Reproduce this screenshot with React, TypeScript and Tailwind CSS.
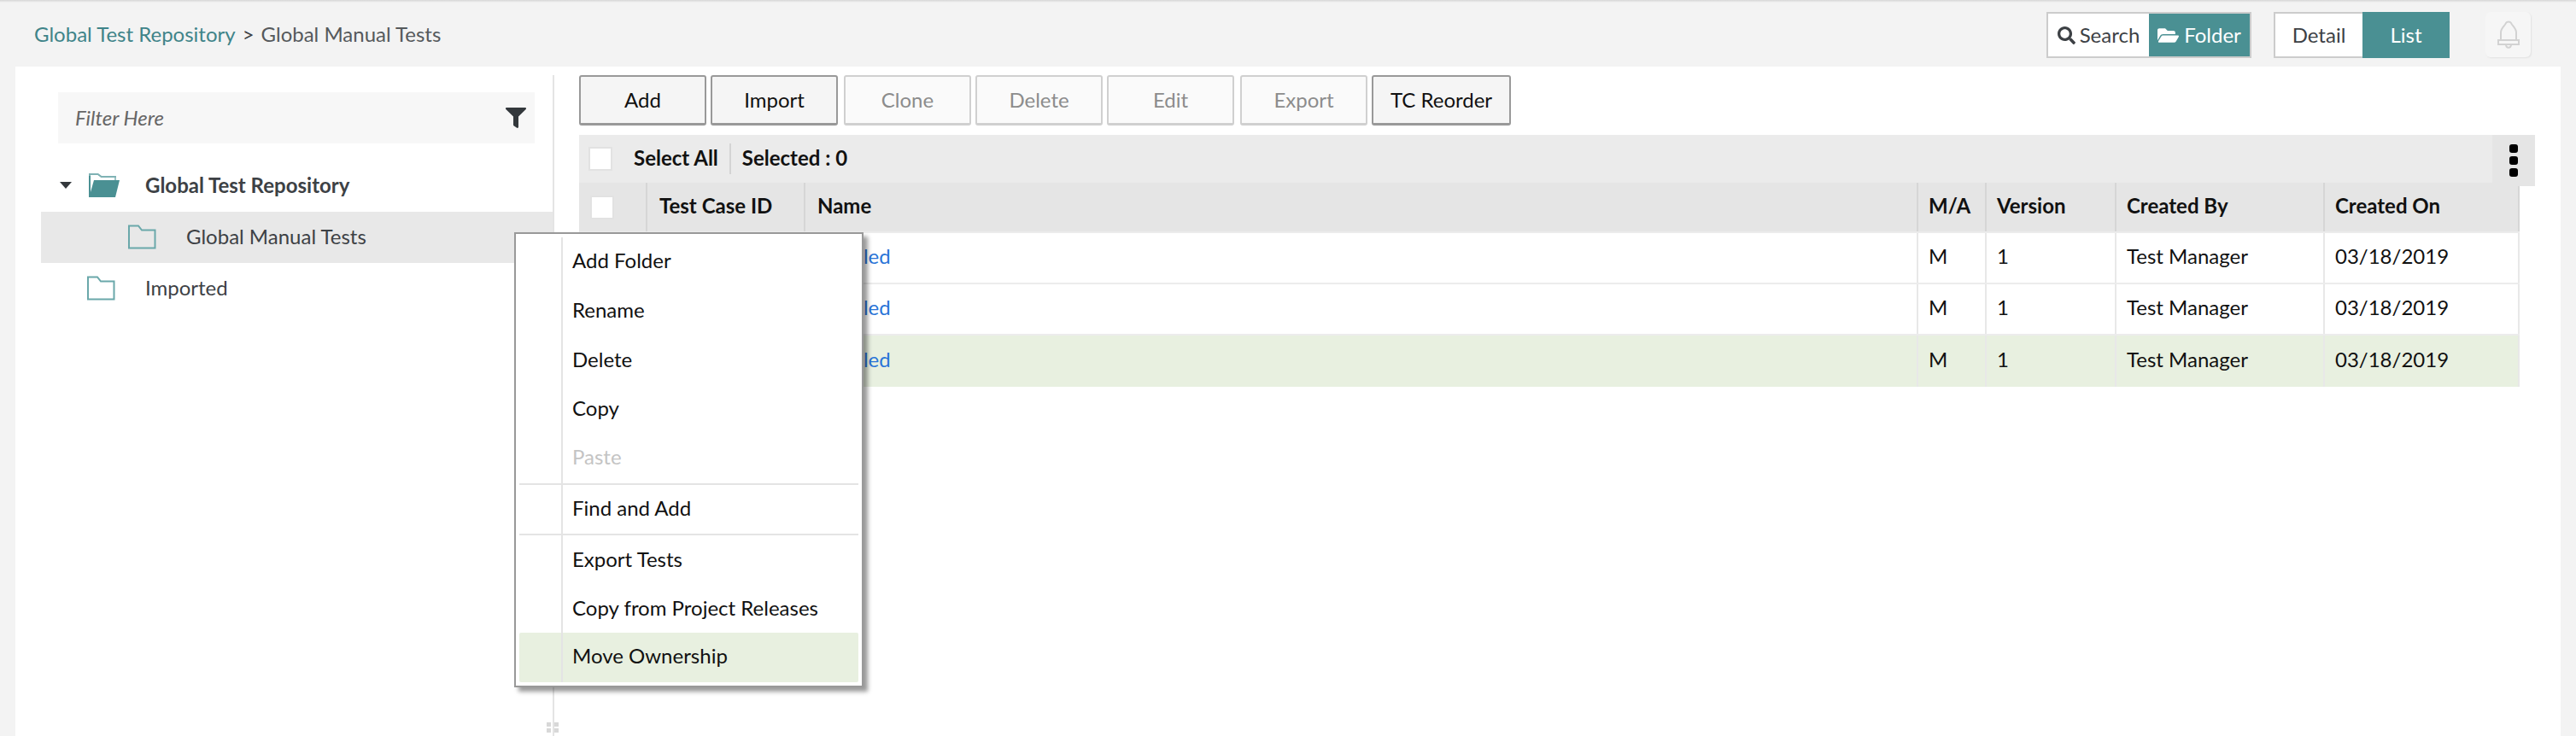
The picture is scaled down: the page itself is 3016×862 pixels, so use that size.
import { FaFilter, FaFolderOpen, FaSearch } from "react-icons/fa";

function OpenFolder() {
  return (
    <svg width="36" height="28" viewBox="0 0 36 28" className="shrink-0">
      <path d="M0 0h11l4 3h17v6H30V5H14L10 2H2v26H0z" fill="#7fb2b4" />
      <path d="M2 2h8l4 3h16v4H8L5 13 2 24z" fill="#ffffff" />
      <path d="M0 28V3h2v19L6 8h30l-5 20z" fill="#4a9093" />
      <path d="M30 5h2v3h-2z" fill="#9cc4c5" />
    </svg>
  );
}

function OutlineFolder() {
  return (
    <svg width="33" height="29" viewBox="0 0 33 29" className="shrink-0" fill="none">
      <path d="M1 27.500V1.500h11l4 5h15.500v21z" stroke="#6aa8aa" strokeWidth="2" />
    </svg>
  );
}

function Bell() {
  return (
    <svg width="26" height="33" viewBox="0 0 26 33" fill="none" stroke="#d2d2d2" strokeWidth="2">
      <path d="M4 23V14C4 9 9 6 10 3c1-2 5-2 6 0 1 3 6 6 6 11v9" />
      <path d="M1 23h24v5H1z" />
      <path d="M10 28c0 5 6 5 6 0" />
    </svg>
  );
}

const toolbar = [
  { label: "Add", on: true, w: "w-[149px]", ml: "" },
  { label: "Import", on: true, w: "w-[149px]", ml: "ml-[5px]" },
  { label: "Clone", on: false, w: "w-[149px]", ml: "ml-[7px]" },
  { label: "Delete", on: false, w: "w-[149px]", ml: "ml-[5px]" },
  { label: "Edit", on: false, w: "w-[149px]", ml: "ml-[5px]" },
  { label: "Export", on: false, w: "w-[149px]", ml: "ml-[7px]" },
  { label: "TC Reorder", on: true, w: "w-[163px]", ml: "ml-[5px]" },
];

const headers = [
  { t: "Test Case ID", pl: "pl-[14px]" },
  { t: "Name", pl: "pl-[14px]" },
  { t: "M/A", pl: "pl-[12px]" },
  { t: "Version", pl: "pl-[12px]" },
  { t: "Created By", pl: "pl-[12px]" },
  { t: "Created On", pl: "pl-[12px]" },
];
const rows = [false, false, true];
const gridCols = "grid grid-cols-[80px_185px_1303px_80px_152px_244px_228px]";

function Checkbox() {
  return <div className="h-[28px] w-[28px] border-2 border-[#e2e2e2] bg-white" />;
}

export default function App() {
  return (
    <div className="flex h-[862px] w-[3016px] flex-col overflow-hidden bg-[#f3f3f3] font-['Lato','Liberation_Sans',sans-serif] text-[24px] leading-[30px] text-[#3d4145]">
      <div className="h-[3px] bg-gradient-to-b from-[#d6d6d6] to-[#f3f3f3]" />
      <header className="flex h-[75px] shrink-0">
        <div className="ml-[40px] flex items-center pb-[2px]">
          <span className="text-[#3f8489]">Global Test Repository</span>
          <span className="ml-[8px]">&gt;</span>
          <span className="ml-[8px] text-[#55595c]">Global Manual Tests</span>
        </div>
        <div className="ml-auto flex pt-[11px]">
          <div className="flex h-[54px] w-[240px] border-2 border-[#cccccc] bg-white">
            <div className="flex w-[118px] items-center justify-center gap-[5px]">
              <FaSearch className="text-[21px] text-[#3d4145]" />
              <span>Search</span>
            </div>
            <div className="flex flex-1 items-center justify-center gap-[6px] bg-[#4a9093] text-white">
              <FaFolderOpen className="text-[25px]" />
              <span>Folder</span>
            </div>
          </div>
          <div className="ml-[26px] flex h-[54px] w-[206px] border-2 border-r-0 border-[#cccccc] bg-white">
            <div className="flex w-[102px] items-center justify-center">Detail</div>
            <div className="-my-[2px] flex flex-1 items-center justify-center bg-[#4a9093] text-white">List</div>
          </div>
          <div className="ml-[42px] mr-[53px] flex h-[53px] w-[53px] items-center justify-center rounded-[6px] bg-[#f6f6f6] pb-[1px] shadow-[1px_1px_2px_rgba(0,0,0,0.07)]">
            <Bell />
          </div>
        </div>
      </header>

      <main className="relative mx-[18px] flex flex-1 bg-white">
        <aside className="w-[629px] shrink-0 pt-[30px]">
          <div className="ml-[50px] flex h-[60px] w-[558px] items-center justify-between bg-[#f7f7f7] pl-[20px] pr-[10px]">
            <span className="italic text-[#666666]">Filter Here</span>
            <FaFilter className="text-[24px] text-[#33383c]" />
          </div>
          <div className="mt-[19px] flex h-[61px] items-center pb-[2px] pl-[52px]">
            <span className="h-0 w-0 border-x-[7px] border-t-[8px] border-x-transparent border-t-[#33383c]" />
            <span className="ml-[20px] flex">
              <OpenFolder />
            </span>
            <span className="ml-[30px] font-bold">Global Test Repository</span>
          </div>
          <div className="ml-[30px] flex h-[60px] items-center bg-[#e8e8e8] pb-[2px] pl-[102px]">
            <OutlineFolder />
            <span className="ml-[35px]">Global Manual Tests</span>
          </div>
          <div className="flex h-[60px] items-center pb-[2px] pl-[84px]">
            <OutlineFolder />
            <span className="ml-[35px]">Imported</span>
          </div>
        </aside>

        <div className="relative mt-[10px] w-[2px] shrink-0 bg-[#e4e4e4]">
          <div className="absolute bottom-[4px] left-[-7px] grid grid-cols-2 gap-x-[8px] gap-y-[2px]">
            <span className="h-[5px] w-[5px] bg-[#d8d8d8]" />
            <span className="h-[5px] w-[5px] bg-[#d8d8d8]" />
            <span className="h-[5px] w-[5px] bg-[#d8d8d8]" />
            <span className="h-[5px] w-[5px] bg-[#d8d8d8]" />
          </div>
        </div>

        <section className="ml-[29px] w-[2290px] shrink-0 pt-[10px]">
          <div className="flex h-[59px]">
            {toolbar.map((b) => (
              <div
                key={b.label}
                className={`flex items-center justify-center rounded-[3px] border-2 border-b-[3px] ${b.w} ${b.ml} ${
                  b.on
                    ? "border-[#999999] bg-[#f5f5f5] text-[#111111]"
                    : "border-[#d0d0d0] bg-[#fafafa] text-[#8c8c8c]"
                }`}
              >
                {b.label}
              </div>
            ))}
          </div>

          <div className="mt-[11px] flex h-[56px] items-center bg-[#ebebeb] text-[#111111]">
            <div className="ml-[11px]">
              <Checkbox />
            </div>
            <span className="ml-[25px] pb-[2px] font-bold">Select All</span>
            <span className="ml-[13px] h-[36px] w-[2px] bg-[#d4d4d4]" />
            <span className="ml-[13px] pb-[2px] font-bold">Selected : 0</span>
            <div className="relative ml-auto h-[56px] w-[50px]">
              <div className="absolute inset-x-0 top-0 flex h-[60px] flex-col items-center justify-center gap-[4px] bg-[#e5e5e5]">
                <span className="h-[10px] w-[10px] rounded-[3px] bg-black" />
                <span className="h-[10px] w-[10px] rounded-[3px] bg-black" />
                <span className="h-[10px] w-[10px] rounded-[3px] bg-black" />
              </div>
            </div>
          </div>

          <div className="w-[2272px]">
            <div className={`${gridCols} h-[59px] border-b-[2px] border-[#ececec] bg-[#e5e5e5] font-bold text-[#111111]`}>
              <div className="flex items-center border-r-2 border-[#d6d6d6] pl-[13px]">
                <Checkbox />
              </div>
              {headers.map((h) => (
                <div key={h.t} className={`flex items-center border-r-2 border-[#d6d6d6] pb-[4px] ${h.pl}`}>
                  {h.t}
                </div>
              ))}
            </div>
            {rows.map((green, i) => (
              <div
                key={i}
                className={`${gridCols} h-[60px] text-[#111111] ${
                  green ? "bg-[#e8f0e0]" : "border-b-[2px] border-[#ececec] bg-white"
                }`}
              >
                <div className="border-r-2 border-[#e8e8e8]" />
                <div className="border-r-2 border-[#e8e8e8]" />
                <div className="flex items-center border-r-2 border-[#e8e8e8] pb-[4px] pl-[14px] text-[#2a75d8]">Untitled</div>
                <div className="flex items-center border-r-2 border-[#e8e8e8] pb-[4px] pl-[12px]">M</div>
                <div className="flex items-center border-r-2 border-[#e8e8e8] pb-[4px] pl-[12px]">1</div>
                <div className="flex items-center border-r-2 border-[#e8e8e8] pb-[4px] pl-[12px]">Test Manager</div>
                <div className="flex items-center border-r-2 border-[#e8e8e8] pb-[4px] pl-[12px]">03/18/2019</div>
              </div>
            ))}
          </div>
        </section>

        <div className="absolute left-[584px] top-[194px] flex w-[409px] flex-col border-2 border-[#999999] bg-white p-[4px] text-[#111111] shadow-[5px_5px_5px_rgba(0,0,0,0.4)]">
          <div className="absolute bottom-[4px] left-[53px] top-[4px] w-[2px] bg-[#e4e4e4]" />
          <div className="flex h-[58px] items-center pb-[4px] pl-[62px]">Add Folder</div>
          <div className="flex h-[58px] items-center pb-[4px] pl-[62px]">Rename</div>
          <div className="flex h-[57px] items-center pb-[4px] pl-[62px]">Delete</div>
          <div className="flex h-[57px] items-center pb-[4px] pl-[62px]">Copy</div>
          <div className="flex h-[58px] items-center pb-[4px] pl-[62px] text-[#c4c4c4]">Paste</div>
          <div className="h-[2px] bg-[#e4e4e4]" />
          <div className="flex h-[57px] items-center pb-[4px] pl-[62px]">Find and Add</div>
          <div className="h-[2px] bg-[#e4e4e4]" />
          <div className="flex h-[58px] items-center pb-[2px] pl-[62px]">Export Tests</div>
          <div className="flex h-[56px] items-center pb-[2px] pl-[62px]">Copy from Project Releases</div>
          <div className="flex h-[58px] items-center rounded-[2px] bg-[#e8f0e0] pb-[4px] pl-[62px]">
            <span className="relative">Move Ownership</span>
          </div>
        </div>
      </main>
    </div>
  );
}
